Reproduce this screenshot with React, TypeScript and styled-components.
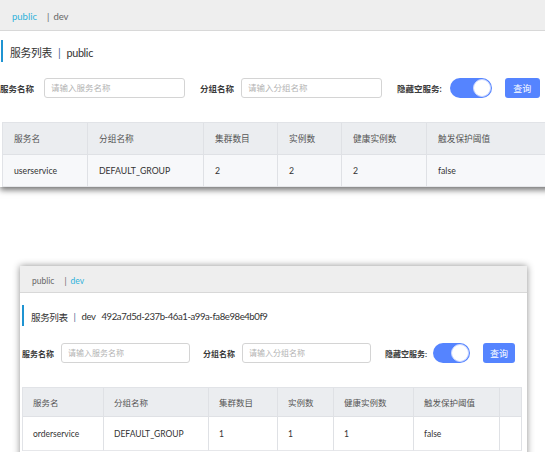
import React from 'react';
import styled, { createGlobalStyle } from 'styled-components';

type Metrics = {
  left: number;
  top: number;
  width: number;
  shadow: string;
  tabH: number;
  tabFont: number;
  titleGap: number;
  titleH: number;
  titleFont: number;
  titleTrack: number;
  barInset: number;
  rowGap: number;
  inset: number;
  labelFont: number;
  inputW: number;
  switchW: number;
  buttonW: number;
  gaps: number[];
  tableGap: number;
  tableRight: number;
  headH: number;
  bodyH: number;
  cols: string;
  cellFont: number;
  cellPad: number;
  bodyBg: string;
  tail: number;
};

type Shot = {
  ns: string;
  nsId?: string;
  service: string;
  count: string;
  m: Metrics;
};

const shots: Shot[] = [
  {
    ns: 'public',
    service: 'userservice',
    count: '2',
    m: {
      left: 0, top: 0, width: 560, shadow: '0 3px 6px rgba(0,0,0,0.55)',
      tabH: 31, tabFont: 9.5, titleGap: 9, titleH: 22, titleFont: 10.8, titleTrack: -0.3, barInset: 1,
      rowGap: 16, inset: 0, labelFont: 8.5, inputW: 141, switchW: 42, buttonW: 35,
      gaps: [10, 15, 7, 15, 8, 13],
      tableGap: 24, tableRight: 0, headH: 32, bodyH: 32,
      cols: '85px 116px 74px 64px 85px 1fr', cellFont: 8.7, cellPad: 11,
      bodyBg: '#f7f8fa', tail: 0,
    },
  },
  {
    ns: 'dev',
    nsId: '492a7d5d-237b-46a1-a99a-fa8e98e4b0f9',
    service: 'orderservice',
    count: '1',
    m: {
      left: 20, top: 79, width: 507, shadow: '0 0 7px rgba(0,0,0,0.45)',
      tabH: 27, tabFont: 8.5, titleGap: 12, titleH: 21, titleFont: 9.6, titleTrack: -0.45, barInset: 2,
      rowGap: 17, inset: 2, labelFont: 8, inputW: 129, switchW: 37, buttonW: 32,
      gaps: [7, 13, 7, 14, 6, 13],
      tableGap: 24, tableRight: 5, headH: 29, bodyH: 34,
      cols: '81px 105px 69px 56px 80px 86px 1fr', cellFont: 8.5, cellPad: 10,
      bodyBg: '#ffffff', tail: 30,
    },
  },
];

const GlobalStyle = createGlobalStyle`
  html, body { margin: 0; padding: 0; background: #fff; overflow: hidden; }
  body { font-family: Lato, "Noto Sans CJK SC", sans-serif; color: #333; }
`;

function App() {
  return (
    <Page>
      <GlobalStyle />
      {shots.map((s) => (
        <ServicePanel key={s.ns} shot={s} />
      ))}
    </Page>
  );
}

export default App;

function ServicePanel({ shot }: { shot: Shot }) {
  const { m } = shot;
  const headers = ['服务名', '分组名称', '集群数目', '实例数', '健康实例数', '触发保护阈值'];
  const cells = [shot.service, 'DEFAULT_GROUP', shot.count, shot.count, shot.count, 'false'];
  const extra = m.cols.split(' ').length - headers.length;
  return (
    <Frame $m={m}>
      <TabBar $m={m}>
        <Tab $active={shot.ns === 'public'}>public</Tab>
        <Sep>|</Sep>
        <Tab $active={shot.ns === 'dev'}>dev</Tab>
      </TabBar>
      <Title $m={m}>
        服务列表<TitleSep>|</TitleSep>{shot.ns}
        {shot.nsId && <NsId>{shot.nsId}</NsId>}
      </Title>
      <Filters $m={m}>
        <Label $m={m}>服务名称</Label>
        <Input $m={m} $gap={m.gaps[0]} placeholder="请输入服务名称" />
        <Label $m={m} $gap={m.gaps[1]}>分组名称</Label>
        <Input $m={m} $gap={m.gaps[2]} placeholder="请输入分组名称" />
        <Label $m={m} $gap={m.gaps[3]}>隐藏空服务:</Label>
        <Switch $m={m} $gap={m.gaps[4]}><Knob /></Switch>
        <Button $m={m} $gap={m.gaps[5]}>查询</Button>
      </Filters>
      <Table $m={m}>
        {headers.map((h) => <HeadCell key={h} $m={m}>{h}</HeadCell>)}
        {Array.from({ length: extra }).map((_, i) => <HeadCell key={'h' + i} $m={m} />)}
        {cells.map((c, i) => <BodyCell key={i} $m={m}>{c}</BodyCell>)}
        {Array.from({ length: extra }).map((_, i) => <BodyCell key={'b' + i} $m={m} />)}
      </Table>
    </Frame>
  );
}

const Page = styled.div`
  height: 452px;
  display: flex;
  flex-direction: column;
  overflow: hidden;
`;

const Frame = styled.section<{ $m: Metrics }>`
  flex-shrink: 0;
  width: ${(p) => p.$m.width}px;
  margin: ${(p) => `${p.$m.top}px 0 0 ${p.$m.left}px`};
  padding-bottom: ${(p) => p.$m.tail}px;
  background: #fff;
  box-shadow: ${(p) => p.$m.shadow};
`;

const TabBar = styled.div<{ $m: Metrics }>`
  box-sizing: border-box;
  height: ${(p) => p.$m.tabH}px;
  display: flex;
  align-items: center;
  padding: 3px 0 0 12px;
  background: #eeeeee;
  border-bottom: 1px solid #d8d8d8;
  font-size: ${(p) => p.$m.tabFont}px;
`;

const Tab = styled.span<{ $active?: boolean }>`
  color: ${(p) => (p.$active ? '#2fb2db' : '#666')};
`;

const Sep = styled.span`
  color: #666;
  margin: 0 4px 0 10px;
`;

const Title = styled.h2<{ $m: Metrics }>`
  box-sizing: border-box;
  height: ${(p) => p.$m.titleH}px;
  margin: ${(p) => `${p.$m.titleGap}px 0 0 ${p.$m.barInset}px`};
  padding: 2px 0 0 7px;
  display: flex;
  align-items: center;
  border-left: 2px solid #1f94d2;
  font-size: ${(p) => p.$m.titleFont}px;
  font-weight: 400;
  color: #333;
  letter-spacing: ${(p) => p.$m.titleTrack}px;
  white-space: nowrap;
`;

const TitleSep = styled.span`
  color: #4a6090;
  margin: 0 6px;
`;

const NsId = styled.span`
  margin-left: 6px;
`;

const Filters = styled.div<{ $m: Metrics }>`
  display: flex;
  align-items: center;
  height: 20px;
  margin-top: ${(p) => p.$m.rowGap}px;
  padding-left: ${(p) => p.$m.inset}px;
`;

const Label = styled.span<{ $m: Metrics; $gap?: number }>`
  margin-left: ${(p) => p.$gap || 0}px;
  font-size: ${(p) => p.$m.labelFont}px;
  font-weight: 700;
  color: #3a3a3a;
  white-space: nowrap;
`;

const Input = styled.input<{ $m: Metrics; $gap: number }>`
  box-sizing: border-box;
  width: ${(p) => p.$m.inputW}px;
  height: 20px;
  margin: 0 0 0 ${(p) => p.$gap}px;
  padding: 0 6px;
  border: 1px solid #d4d4d4;
  border-radius: 3px;
  font-family: inherit;
  font-size: ${(p) => p.$m.labelFont}px;
  outline: none;
  &::placeholder {
    color: #b3b3b3;
  }
`;

const Switch = styled.span<{ $m: Metrics; $gap: number }>`
  box-sizing: border-box;
  width: ${(p) => p.$m.switchW}px;
  height: 20px;
  margin-left: ${(p) => p.$gap}px;
  padding: 1px;
  display: flex;
  justify-content: flex-end;
  border-radius: 10px;
  background: #5584ff;
`;

const Knob = styled.span`
  box-sizing: border-box;
  width: 18px;
  height: 18px;
  border-radius: 50%;
  background: #fff;
  border: 1px solid #c9d6ff;
`;

const Button = styled.button<{ $m: Metrics; $gap: number }>`
  width: ${(p) => p.$m.buttonW}px;
  height: 20px;
  margin-left: ${(p) => p.$gap}px;
  padding: 0;
  border: none;
  border-radius: 3px;
  background: #5584ff;
  color: #fff;
  font-family: inherit;
  font-size: 9px;
`;

const Table = styled.div<{ $m: Metrics }>`
  display: grid;
  grid-template-columns: ${(p) => p.$m.cols};
  margin: ${(p) => `${p.$m.tableGap}px ${p.$m.tableRight}px 0 2px`};
  border-left: 1px solid #e1e3e7;
  border-top: 1px solid #e1e3e7;
`;

const HeadCell = styled.div<{ $m: Metrics }>`
  box-sizing: border-box;
  height: ${(p) => p.$m.headH}px;
  display: flex;
  align-items: center;
  padding-left: ${(p) => p.$m.cellPad}px;
  background: #ebedf0;
  border-right: 1px solid #dfe1e5;
  border-bottom: 1px solid #dfe1e5;
  font-size: ${(p) => p.$m.cellFont}px;
  color: #555;
  white-space: nowrap;
`;

const BodyCell = styled(HeadCell)`
  height: ${(p) => p.$m.bodyH}px;
  background: ${(p) => p.$m.bodyBg};
  border-bottom-color: #e6e7ea;
  color: #333;
`;
